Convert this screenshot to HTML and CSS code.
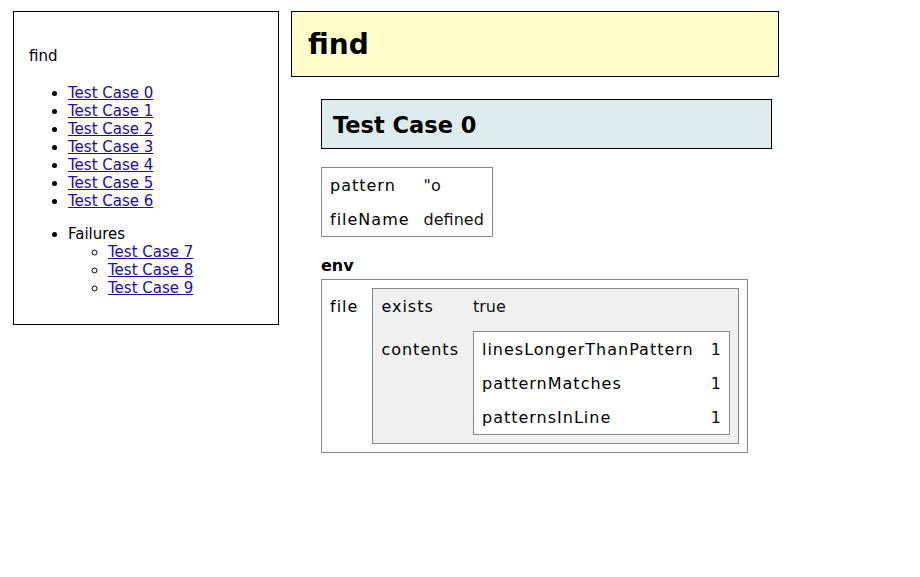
FILE: index.html
```html
<!DOCTYPE html>
<html>
<head>
<meta charset="utf-8">
<title>find</title>
<link rel="stylesheet" href="styles.css">
</head>
<body>
<nav class="nav">
  <div class="nav-title">find</div>
  <ul class="cases">
    <li><a href="#">Test Case 0</a></li>
    <li><a href="#">Test Case 1</a></li>
    <li><a href="#">Test Case 2</a></li>
    <li><a href="#">Test Case 3</a></li>
    <li><a href="#">Test Case 4</a></li>
    <li><a href="#">Test Case 5</a></li>
    <li><a href="#">Test Case 6</a></li>
  </ul>
  <ul class="cases failures">
    <li>Failures
      <ul class="sub">
        <li><a href="#">Test Case 7</a></li>
        <li><a href="#">Test Case 8</a></li>
        <li><a href="#">Test Case 9</a></li>
      </ul>
    </li>
  </ul>
</nav>
<main class="main">
  <h1 class="title">find</h1>
  <section class="case">
    <h2 class="case-title">Test Case 0</h2>
    <table class="kv params">
      <tr><td class="k">pattern</td><td class="v">&quot;o</td></tr>
      <tr><td class="k">fileName</td><td class="v">defined</td></tr>
    </table>
    <div class="env-title">env</div>
    <table class="kv">
      <tr>
        <td class="k">file</td>
        <td class="v nest">
          <table class="kv gray">
            <tr><td class="k">exists</td><td class="v">true</td></tr>
            <tr>
              <td class="k">contents</td>
              <td class="v nest">
                <table class="kv">
                  <tr><td class="k">linesLongerThanPattern</td><td class="v num">1</td></tr>
                  <tr><td class="k">patternMatches</td><td class="v num">1</td></tr>
                  <tr><td class="k">patternsInLine</td><td class="v num">1</td></tr>
                </table>
              </td>
            </tr>
          </table>
        </td>
      </tr>
    </table>
  </section>
</main>
</body>
</html>
```
FILE: styles.css
```css
html, body {
  background: #fff;
}
body {
  margin: 0;
  padding: 11px 13px;
  display: flex;
  align-items: flex-start;
  gap: 12px;
  font-family: "DejaVu Sans", Verdana, sans-serif;
  color: #000;
}
.nav {
  box-sizing: border-box;
  width: 266px;
  border: 1px solid #000;
  padding: 35px 15px 27px 15px;
  font-size: 15px;
  line-height: 18px;
}
.nav-title {
  margin: 0;
}
.cases {
  margin: 19px 0 0;
  padding-left: 39px;
  list-style: disc;
}
.cases.failures {
  margin-top: 15px;
}
.sub {
  margin: 0;
  padding-left: 40px;
  list-style: circle;
}
.nav a {
  color: #1a0dab;
  text-decoration: underline;
}
.main {
  box-sizing: border-box;
  width: 488px;
}
.title {
  margin: 0;
  background: #ffffcc;
  border: 1px solid #000;
  padding: 16px 16px 14px;
  font-size: 28px;
  line-height: 34px;
  font-weight: bold;
}
.case {
  margin: 22px 0 0 30px;
}
.case-title {
  box-sizing: border-box;
  width: 451px;
  margin: 0;
  background: #deeced;
  border: 1px solid #000;
  padding: 12px 11px 10px;
  font-size: 22.5px;
  line-height: 26px;
  font-weight: bold;
}
.kv {
  border: 1px solid #888;
  border-collapse: separate;
  border-spacing: 0;
  font-size: 16px;
  line-height: 18px;
  background: #fff;
}
.kv td {
  vertical-align: baseline;
  white-space: nowrap;
}
.kv td.k {
  padding: 9px 14px 7px 8px;
  letter-spacing: 1px;
  color: #000;
}
.kv td.v {
  padding: 9px 8px 7px 0;
  color: #111;
}
.kv td.v.num {
  padding-left: 3px;
}
.kv td.v.nest {
  padding: 8px 8px 8px 0;
}
.kv.gray {
  background: #f0f0f0;
}
.params {
  margin-top: 18px;
}
.env-title {
  margin: 20px 0 4px;
  font-size: 16px;
  line-height: 18px;
  font-weight: bold;
}
```
